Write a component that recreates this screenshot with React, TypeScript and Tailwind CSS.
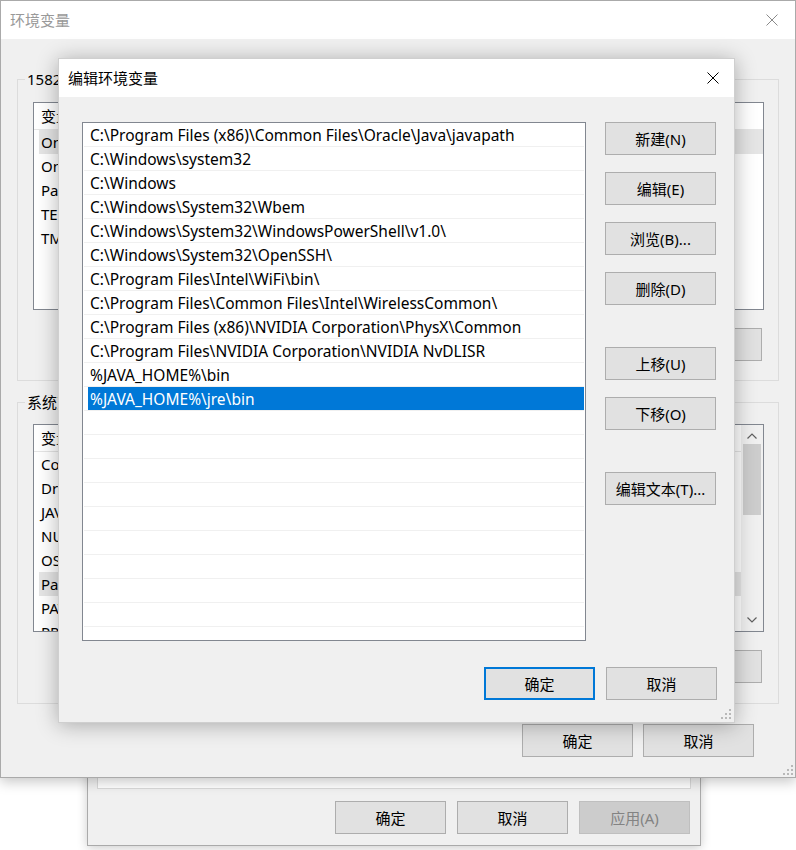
import React from 'react';
import clsx from 'clsx';

const paths = [
  'C:\\Program Files (x86)\\Common Files\\Oracle\\Java\\javapath',
  'C:\\Windows\\system32',
  'C:\\Windows',
  'C:\\Windows\\System32\\Wbem',
  'C:\\Windows\\System32\\WindowsPowerShell\\v1.0\\',
  'C:\\Windows\\System32\\OpenSSH\\',
  'C:\\Program Files\\Intel\\WiFi\\bin\\',
  'C:\\Program Files\\Common Files\\Intel\\WirelessCommon\\',
  'C:\\Program Files (x86)\\NVIDIA Corporation\\PhysX\\Common',
  'C:\\Program Files\\NVIDIA Corporation\\NVIDIA NvDLISR',
  '%JAVA_HOME%\\bin',
  '%JAVA_HOME%\\jre\\bin',
];

const userVars = [
  { name: 'OneDrive', value: 'C:\\Users\\15829\\OneDrive' },
  { name: 'OneDriveConsumer', value: 'C:\\Users\\15829\\OneDrive' },
  { name: 'Path', value: 'C:\\Users\\15829\\AppData\\Local\\Microsoft\\WindowsApps;' },
  { name: 'TEMP', value: 'C:\\Users\\15829\\AppData\\Local\\Temp' },
  { name: 'TMP', value: 'C:\\Users\\15829\\AppData\\Local\\Temp' },
];

const sysVars = [
  { name: 'ComSpec', value: 'C:\\Windows\\system32\\cmd.exe' },
  { name: 'DriverData', value: 'C:\\Windows\\System32\\Drivers\\DriverData' },
  { name: 'JAVA_HOME', value: 'C:\\Program Files\\Java\\jdk1.8.0_251' },
  { name: 'NUMBER_OF_PROCESSORS', value: '8' },
  { name: 'OS', value: 'Windows_NT' },
  { name: 'Path', value: 'C:\\Program Files (x86)\\Common Files\\Oracle\\Java\\javapath;' },
  { name: 'PATHEXT', value: '.COM;.EXE;.BAT;.CMD;.VBS;.VBE;.JS;.JSE;.WSF;.WSH;.MSC' },
  { name: 'PROCESSOR_ARCHITECTURE', value: 'AMD64' },
];

type BtnProps = { label: string; primary?: boolean; disabled?: boolean; className?: string };

const Btn: React.FC<BtnProps> = ({ label, primary, disabled, className }) => (
  <div
    className={clsx(
      'flex h-[33px] w-[111px] shrink-0 items-center justify-center text-[15px] leading-[20px]',
      primary
        ? 'border-2 border-[#0078d7] bg-[#e1e1e1] text-black'
        : disabled
          ? 'border border-[#bfbfbf] bg-[#cccccc] text-[#838383]'
          : 'border border-[#adadad] bg-[#e1e1e1] text-black',
      className
    )}
  >
    {label}
  </div>
);

const CloseX: React.FC<{ color: string }> = ({ color }) => (
  <svg width="12" height="12" viewBox="0 0 12 12">
    <path d="M0.5 0.5 L11.5 11.5 M11.5 0.5 L0.5 11.5" stroke={color} strokeWidth="1" fill="none" />
  </svg>
);

const Grip = () => (
  <svg width="10" height="10" viewBox="0 0 10 10">
    {[
      [8, 0],
      [4, 4],
      [8, 4],
      [0, 8],
      [4, 8],
      [8, 8],
    ].map(([x, y]) => (
      <rect key={`${x}-${y}`} x={x} y={y} width="2" height="2" fill="#b8b8b8" />
    ))}
  </svg>
);

type VarListProps = { rows: { name: string; value: string }[]; selected: number; scroll?: boolean };

const VarList: React.FC<VarListProps> = ({ rows, selected, scroll }) => (
  <div className="flex h-[208px] overflow-hidden border border-[#828790] bg-white">
    <div className="flex-1 overflow-hidden">
      <div className="flex h-[27px] items-center border-b border-[#e5e5e5]">
        <div className="w-[190px] shrink-0 border-r border-[#e5e5e5] pl-[7px]">变量</div>
        <div className="pl-[7px]">值</div>
      </div>
      {rows.map((r, i) => (
        <div
          key={r.name}
          className={clsx('ml-[5px] flex h-[24px] items-center whitespace-nowrap', i === selected && 'bg-[#e5e5e5]')}
        >
          <div className="w-[188px] shrink-0 pl-[2px]">{r.name}</div>
          <div className="pl-[7px]">{r.value}</div>
        </div>
      ))}
    </div>
    {scroll && (
      <div className="flex w-[22px] shrink-0 flex-col items-center bg-[#f0f0f0] py-[8px]">
        <svg width="10" height="6" viewBox="0 0 10 6">
          <path d="M0.5 5.5 L5 1 L9.5 5.5" stroke="#606060" strokeWidth="1.2" fill="none" />
        </svg>
        <div className="mt-[5px] h-[71px] w-[18px] bg-[#cdcdcd]" />
        <div className="flex-1" />
        <svg width="10" height="6" viewBox="0 0 10 6">
          <path d="M0.5 0.5 L5 5 L9.5 0.5" stroke="#606060" strokeWidth="1.2" fill="none" />
        </svg>
      </div>
    )}
  </div>
);

const App: React.FC = () => {
  const emptyRows = Array.from({ length: 10 });

  return (
    <div className="relative h-[850px] w-[796px] overflow-hidden bg-white font-['Noto_Sans','Noto_Sans_CJK_SC',sans-serif] text-[15px] leading-[20px] text-black">
      {/* 系统属性 (behind) */}
      <div className="absolute left-[87px] top-[600px] flex h-[246px] w-[614px] flex-col justify-end border border-[#aaaaaa] bg-[#f0f0f0] px-[9px] pb-[11px] shadow-[0_2px_10px_rgba(0,0,0,0.2)]">
        <div className="h-[200px] border border-[#d9d9d9] bg-white" />
        <div className="mt-[12px] flex justify-end gap-[11px] pr-[1px]">
          <Btn label="确定" />
          <Btn label="取消" />
          <Btn label="应用(A)" disabled />
        </div>
      </div>

      {/* 环境变量 */}
      <div className="absolute left-0 top-0 flex h-[778px] w-[796px] flex-col border border-[#aaaaaa] bg-[#f0f0f0] shadow-[0_4px_12px_rgba(0,0,0,0.22)]">
        <div className="flex h-[38px] shrink-0 items-center justify-between bg-white pl-[9px] pr-[17px] text-[#999999]">
          <span>环境变量</span>
          <CloseX color="#8a8a8a" />
        </div>
        <div className="flex flex-col px-[16px] pt-[30px]">
          <fieldset className="border border-[#dcdcdc] pb-[19px] pl-[15px] pr-[14px] pt-[13px]">
            <legend className="-ml-[8px] px-[2px]">15829 的用户变量(U)</legend>
            <VarList rows={userVars} selected={0} />
            <div className="mt-[18px] flex justify-end gap-[11px] pr-[2px]">
              <Btn label="新建(N)..." />
              <Btn label="编辑(E)..." />
              <Btn label="删除(D)" />
            </div>
          </fieldset>
          <fieldset className="mt-[11px] border border-[#dcdcdc] pb-[20px] pl-[15px] pr-[14px] pt-[12px]">
            <legend className="-ml-[8px] px-[2px]">系统变量(S)</legend>
            <VarList rows={sysVars} selected={5} scroll />
            <div className="mt-[18px] flex justify-end gap-[11px] pr-[2px]">
              <Btn label="新建(W)..." />
              <Btn label="编辑(I)..." />
              <Btn label="删除(L)" />
            </div>
          </fieldset>
          <div className="mt-[20px] flex justify-end gap-[10px] pr-[25px]">
            <Btn label="确定" />
            <Btn label="取消" />
          </div>
        </div>
        <div className="absolute bottom-[2px] right-[2px]">
          <Grip />
        </div>
      </div>

      {/* 编辑环境变量 */}
      <div className="absolute left-[58px] top-[58px] flex h-[665px] w-[677px] flex-col border border-[#cfcfcf] bg-[#f0f0f0] shadow-[0_2px_20px_rgba(0,0,0,0.3)]">
        <div className="flex h-[38px] shrink-0 items-center justify-between bg-white pl-[9px] pr-[15px]">
          <span>编辑环境变量</span>
          <CloseX color="#000000" />
        </div>
        <div className="flex flex-col pl-[23px] pr-[17px] pt-[25px]">
          <div className="flex">
            <div className="h-[519px] w-[504px] overflow-hidden border border-[#828790] bg-white pl-[1px] pr-[1px] text-[15.5px]">
              {paths.map((p, i) =>
                i === paths.length - 1 ? (
                  <div key={p} className="flex h-[24px] border-b border-[#f0f0f0] pl-[4px]">
                    <div className="flex h-[23px] flex-1 items-center whitespace-nowrap bg-[#0078d7] pl-[2px] text-white">
                      {p}
                    </div>
                  </div>
                ) : (
                  <div key={p} className="flex h-[24px] items-center whitespace-nowrap border-b border-[#f0f0f0] pl-[6px]">
                    {p}
                  </div>
                )
              )}
              {emptyRows.map((_, i) => (
                <div key={i} className="h-[24px] border-b border-[#f0f0f0]" />
              ))}
            </div>
            <div className="ml-[19px] flex flex-col">
              <Btn label="新建(N)" />
              <Btn label="编辑(E)" className="mt-[17px]" />
              <Btn label="浏览(B)..." className="mt-[17px]" />
              <Btn label="删除(D)" className="mt-[17px]" />
              <Btn label="上移(U)" className="mt-[42px]" />
              <Btn label="下移(O)" className="mt-[17px]" />
              <Btn label="编辑文本(T)..." className="mt-[42px]" />
            </div>
          </div>
          <div className="mt-[26px] flex justify-end gap-[11px]">
            <Btn label="确定" primary />
            <Btn label="取消" />
          </div>
        </div>
        <div className="absolute bottom-[3px] right-[3px]">
          <Grip />
        </div>
      </div>
    </div>
  );
};

export default App;
